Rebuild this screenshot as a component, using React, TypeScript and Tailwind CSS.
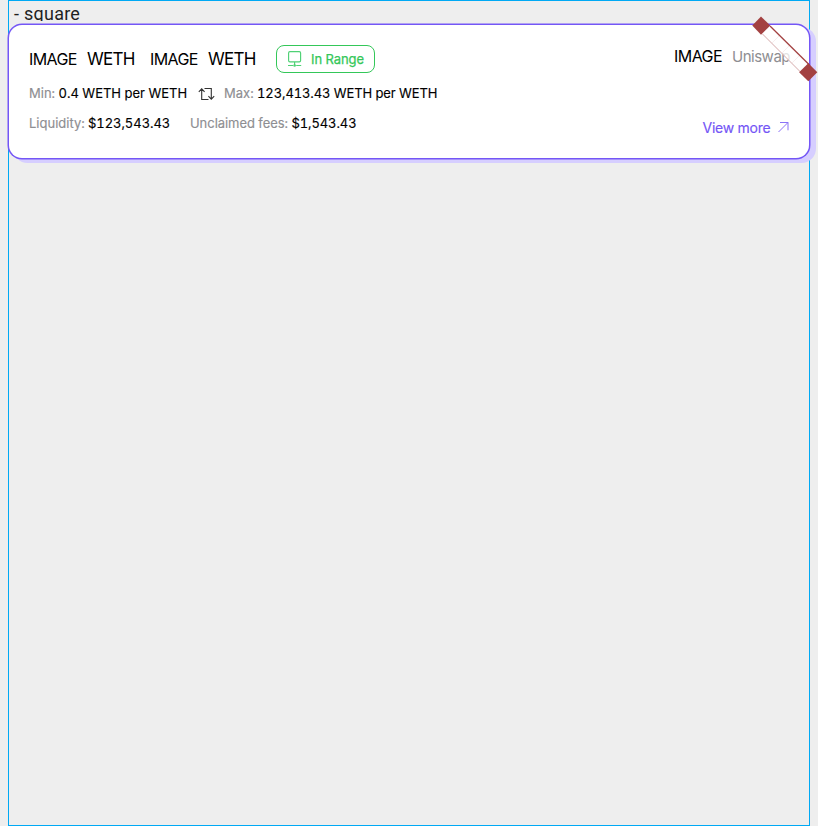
import React from "react";

function RangeIcon() {
  return (
    <svg width="14" height="18" viewBox="0 0 14 18" fill="none" stroke="#4fd175" strokeWidth="1.15" className="shrink-0">
      <rect x="0.6" y="1.6" width="12" height="10.2" rx="1.3" />
      <path d="M6.6 12v3M0 15.5h5M8.2 15.5h5" />
      <circle cx="6.6" cy="15.5" r="1.3" fill="#4fd175" stroke="none" />
    </svg>
  );
}

function SwapIcon() {
  return (
    <svg width="18" height="14" viewBox="0 0 18 14" fill="none" stroke="#333" strokeWidth="1.1" className="shrink-0">
      <path d="M.8 4.8 3.7 1.8l2.9 3M3.7 2v10.5h6.8M6.5 1.5h6.8V12M10.4 9.2l2.9 2.9 2.9-2.9" />
    </svg>
  );
}

function Ribbon() {
  return (
    <svg className="absolute top-[-9px] right-[-9px]" width="66" height="66" viewBox="752 16 66 66">
      <path d="M770 26 809 65 800 72 762 34Z" fill="#fff" fillOpacity=".75" />
      <path d="m779 36-7 7m17 3-7 7m17 3-7 7" stroke="#f4e6e6" strokeWidth=".7" />
      <path d="m762.5 34 38 38" stroke="#cf9f9f" strokeWidth=".9" />
      <path d="m770 26 39.5 39" stroke="#a34141" strokeWidth="1.3" />
      <path d="m761 16.5 9.3 9-9.3 9.2-8.7-9.2Z" fill="#a34141" />
      <path d="m808.3 63.2 9 9.1-9 9-9.2-9Z" fill="#a34141" />
    </svg>
  );
}

export default function App() {
  return (
    <div className="h-[826px] w-[818px] overflow-hidden bg-[#eeeeee] pl-2 font-['Inter','Liberation_Sans',sans-serif]">
      <main className="h-[826px] w-[802px] border border-[#00a9f4]">
        <div className="h-5 overflow-hidden pl-[5px] font-['Roboto',sans-serif] text-[18px] leading-[26px] tracking-[0.25px] whitespace-nowrap text-[#1f1f1f]">
          - square
        </div>
        <section className="relative mt-[4px] flex h-[133px] w-[800px] justify-between rounded-[13px] bg-white pt-[19px] pr-[19px] pl-[20px] shadow-[0_0_0_1.5px_#7456f6,5.5px_3.5px_0_1.5px_#d6ceff]">
          <div>
            <div className="flex h-[29px] items-center whitespace-nowrap text-black">
              <span className="w-[58px] text-[16px] tracking-[-0.6px]">IMAGE</span>
              <span className="w-[63px] pt-[2px] text-[17px] tracking-[-0.7px]">WETH</span>
              <span className="w-[58px] text-[16px] tracking-[-0.6px]">IMAGE</span>
              <span className="w-[68px] pt-[2px] text-[17px] tracking-[-0.7px]">WETH</span>
              <div className="flex h-[28px] w-[99px] items-center rounded-[8px] border border-[#34c759] pl-[11px]">
                <RangeIcon />
                <span className="ml-[9px] pt-[2px] text-[13px] tracking-[-0.1px] text-[#34c759] [-webkit-text-stroke:0.25px_#34c759]">In Range</span>
              </div>
            </div>
            <div className="mt-[11px] flex h-5 items-center text-[13px] whitespace-nowrap tabular-nums [-webkit-text-stroke:0.15px_currentColor]">
              <div className="flex w-[169px]">
                <span className="w-[29.5px] text-[#8e8e92]">Min:</span>
                <span className="text-black">0.4 WETH per WETH</span>
              </div>
              <SwapIcon />
              <div className="ml-[8px] flex">
                <span className="w-[33px] text-[#8e8e92]">Max:</span>
                <span className="tracking-[-0.1px] text-black">123,413.43 WETH per WETH</span>
              </div>
            </div>
            <div className="mt-[10px] flex h-5 items-center text-[13px] whitespace-nowrap tabular-nums [-webkit-text-stroke:0.15px_currentColor]">
              <span className="w-[59px] text-[#8e8e92]">Liquidity:</span>
              <span className="w-[102px] tracking-[-0.05px] text-black">$123,543.43</span>
              <span className="w-[101.5px] tracking-[-0.05px] text-[#8e8e92]">Unclaimed fees:</span>
              <span className="tracking-[-0.1px] text-black">$1,543.43</span>
            </div>
          </div>
          <div className="flex w-[116px] flex-col justify-between pb-[19px] whitespace-nowrap">
            <div className="flex h-6 items-center">
              <span className="w-[59px] text-[16px] tracking-[-0.55px] text-black">IMAGE</span>
              <span className="pt-[2px] text-[15px] tracking-[-0.5px] text-[#8e8e92]">Uniswap</span>
            </div>
            <div className="flex h-6 items-center pl-[28.5px] text-[#7456f6]">
              <span className="w-[75.5px] shrink-0 text-[14px] tracking-[-0.25px] [-webkit-text-stroke:0.15px_currentColor]">View more</span>
              <svg width="11" height="11" viewBox="0 0 11 11" fill="none" stroke="#8b73f7" className="shrink-0">
                <path d="m.5 10 9.5-9.5M2 .5h8v7.8" />
              </svg>
            </div>
          </div>
          <Ribbon />
        </section>
      </main>
    </div>
  );
}
